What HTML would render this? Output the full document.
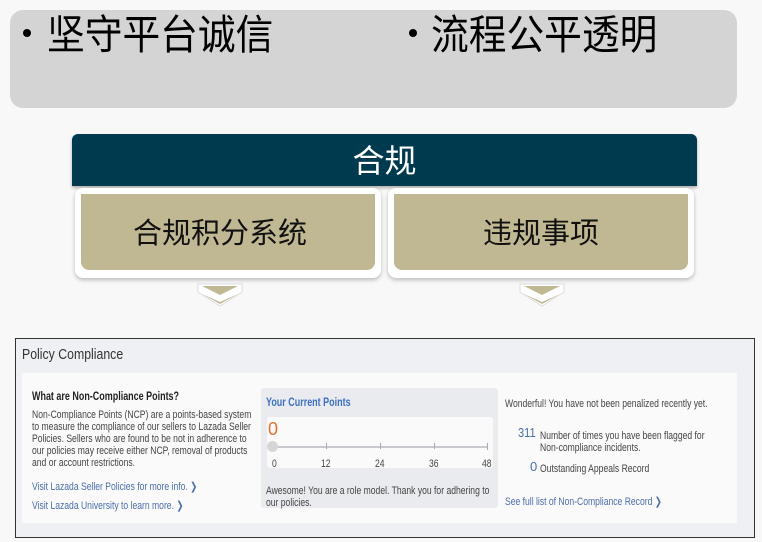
<!DOCTYPE html>
<html><head><meta charset="utf-8"><style>
*{margin:0;padding:0;box-sizing:border-box}
body{width:762px;height:542px;background:#f8f8f8;position:relative;overflow:hidden;font-family:"Liberation Sans","Noto Sans CJK SC",sans-serif}
.a{position:absolute}
.cjk{font-family:"Noto Sans CJK SC","WenQuanYi Zen Hei",sans-serif;white-space:nowrap}
.s{font-size:11px;color:#444;line-height:12px;white-space:nowrap;transform-origin:0 0;transform:scaleX(.78)}
.link{color:#4a6ea9}
</style></head><body>
<div class="a" style="left:10px;top:10px;width:727px;height:98px;background:#d4d4d4;border-radius:13px"></div>
<div class="a" style="left:23px;top:29px;width:8px;height:8px;border-radius:50%;background:#000"></div>
<div class="a cjk" style="left:47px;top:6px;font-size:41px;line-height:50px;color:#000;transform:scaleX(.92);transform-origin:0 0">坚守平台诚信</div>
<div class="a" style="left:409px;top:29px;width:8px;height:8px;border-radius:50%;background:#000"></div>
<div class="a cjk" style="left:431px;top:6px;font-size:41px;line-height:50px;color:#000;transform:scaleX(.92);transform-origin:0 0">流程公平透明</div>

<div class="a" style="left:72px;top:134px;width:625px;height:52px;background:#003a4f;border-radius:6px 6px 0 0;box-shadow:0 2px 3px rgba(0,0,0,.3)"></div>
<div class="a cjk" style="left:72px;top:136px;width:625px;text-align:center;font-size:32px;line-height:46px;color:#fff">合规</div>

<div class="a" style="left:75px;top:188px;width:306px;height:90px;background:#fff;border-radius:8px;box-shadow:0 2px 4px rgba(0,0,0,.25)"></div>
<div class="a" style="left:81px;top:194px;width:294px;height:76px;background:#c0b892;border-radius:0 0 8px 8px"></div>
<div class="a cjk" style="left:73px;top:210px;width:294px;text-align:center;font-size:29px;line-height:42px;color:#111">合规积分系统</div>
<div class="a" style="left:388px;top:188px;width:306px;height:90px;background:#fff;border-radius:8px;box-shadow:0 2px 4px rgba(0,0,0,.25)"></div>
<div class="a" style="left:394px;top:194px;width:294px;height:76px;background:#c0b892;border-radius:0 0 8px 8px"></div>
<div class="a cjk" style="left:394px;top:210px;width:294px;text-align:center;font-size:29px;line-height:42px;color:#111">违规事项</div>

<svg class="a" style="left:196px;top:282px" width="50" height="26"><path d="M2 2H46V10L24 24L2 10Z" fill="#fff" stroke="#ddd"/><path d="M6 4H42L24 13Z" fill="#c0b892"/><path d="M6 12L24 20L42 12L24 22Z" fill="#c0b892"/></svg>
<svg class="a" style="left:518px;top:282px" width="50" height="26"><path d="M2 2H46V10L24 24L2 10Z" fill="#fff" stroke="#ddd"/><path d="M6 4H42L24 13Z" fill="#c0b892"/><path d="M6 12L24 20L42 12L24 22Z" fill="#c0b892"/></svg>

<div class="a" style="left:15px;top:338px;width:740px;height:200px;background:#eef0f3;border:1px solid #333"></div>
<div class="a" style="left:22px;top:346px;font-size:15px;color:#333;transform:scaleX(.82);transform-origin:0 0;white-space:nowrap">Policy Compliance</div>
<div class="a" style="left:22px;top:373px;width:715px;height:150px;background:#fafafa"></div>
<div class="a s" style="left:32px;top:391px;font-weight:bold;color:#222;font-size:11.5px">What are Non-Compliance Points?</div>
<div class="a s" style="left:32px;top:409px">Non-Compliance Points (NCP) are a points-based system<br>to measure the compliance of our sellers to Lazada Seller<br>Policies. Sellers who are found to be not in adherence to<br>our policies may receive either NCP, removal of products<br>and or account restrictions.</div>
<div class="a s link" style="left:32px;top:481px">Visit Lazada Seller Policies for more info. ❯</div>
<div class="a s link" style="left:32px;top:500px">Visit Lazada University to learn more. ❯</div>

<div class="a" style="left:261px;top:388px;width:237px;height:120px;background:#eaebef;border-radius:3px"></div>
<div class="a s" style="left:266px;top:397px;font-weight:bold;color:#3d6fc0;font-size:11.5px">Your Current Points</div>
<div class="a" style="left:267px;top:417px;width:226px;height:51px;background:#fafafa;border-radius:3px"></div>
<div class="a" style="left:268px;top:419px;font-size:18px;color:#e0702f">0</div>
<div class="a" style="left:272px;top:446px;width:216px;height:2px;background:#c8c9ce"></div>
<div class="a" style="left:267px;top:441px;width:11px;height:11px;border-radius:50%;background:#d6d6d6"></div>
<div class="a" style="left:326px;top:443px;width:1px;height:6px;background:#aaa"></div>
<div class="a" style="left:380px;top:443px;width:1px;height:6px;background:#aaa"></div>
<div class="a" style="left:434px;top:443px;width:1px;height:6px;background:#aaa"></div>
<div class="a" style="left:487px;top:443px;width:1px;height:7px;background:#aaa"></div>
<div class="a s" style="left:272px;top:458px">0</div>
<div class="a s" style="left:321px;top:458px">12</div>
<div class="a s" style="left:375px;top:458px">24</div>
<div class="a s" style="left:429px;top:458px">36</div>
<div class="a s" style="left:482px;top:458px">48</div>
<div class="a s" style="left:266px;top:485px">Awesome! You are a role model. Thank you for adhering to<br>our policies.</div>

<div class="a s" style="left:505px;top:398px">Wonderful! You have not been penalized recently yet.</div>
<div class="a" style="left:518px;top:425px;font-size:13px;color:#4a6ea9;transform:scaleX(.85);transform-origin:0 0">311</div>
<div class="a s" style="left:540px;top:430px">Number of times you have been flagged for<br>Non-compliance incidents.</div>
<div class="a" style="left:530px;top:459px;font-size:13px;color:#4a6ea9">0</div>
<div class="a s" style="left:540px;top:463px">Outstanding Appeals Record</div>
<div class="a s link" style="left:505px;top:496px">See full list of Non-Compliance Record ❯</div>
</body></html>
